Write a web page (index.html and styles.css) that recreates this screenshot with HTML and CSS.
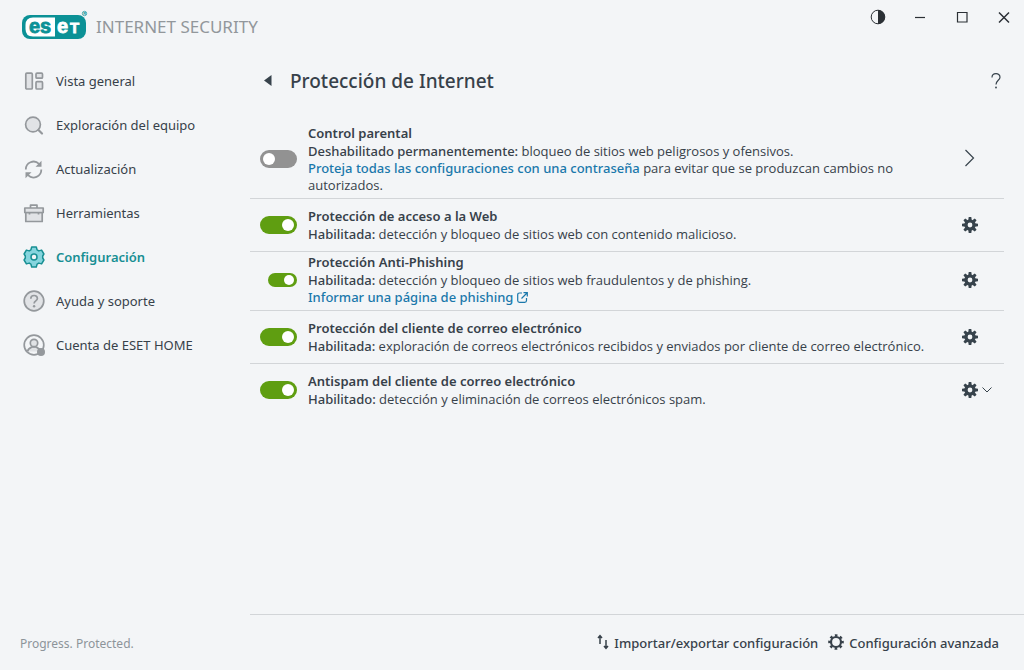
FILE: index.html
```
<!DOCTYPE html>
<html lang="es">
<head>
  <meta charset="UTF-8" />
  <meta name="viewport" content="width=device-width, initial-scale=1" />
  <title>ESET Internet Security</title>
  <link rel="stylesheet" href="styles.css">
</head>
<body>

<!-- Shared icons -->
<svg class="sprite" aria-hidden="true">
  <symbol id="cog" viewBox="0 0 16 16">
    <g fill="currentColor">
      <path fill-rule="evenodd" d="M8 2.4a5.6 5.6 0 1 0 0 11.2a5.6 5.6 0 1 0 0-11.2zM8 5.6a2.4 2.4 0 1 1 0 4.8a2.4 2.4 0 1 1 0-4.8z"/>
      <g id="teeth">
        <path d="M6.700 0h2.600l.5 3.400H6.200zM6.700 16h2.600l.5-3.400H6.200zM0 6.700v2.600l3.400.5V6.200zM16 6.700v2.600l-3.400.5V6.200z"/>
      </g>
      <use href="#teeth" transform="rotate(45 8 8)"/>
    </g>
  </symbol>
</svg>

<div class="window">
  <header class="titlebar">
    <a class="brand" href="#">
      <svg class="logo" width="68" height="30" viewBox="0 0 68 30" role="img" aria-label="eset">
        <rect x="0" y="5" width="64" height="24" rx="8" fill="#0b9196"/>
        <path d="M33 7.500H11Q3.500 7.500 3.500 15v4Q3.500 26.500 11 26.500H33z" fill="#fff"/>
        <g class="logo-text" stroke-width=".8">
          <text x="7" y="22.500" fill="#0b9196" stroke="#0b9196">es</text>
          <text x="35" y="22.500" fill="#fff" stroke="#fff">e</text>
          <text class="logo-t" x="48" y="22.500" fill="#fff" stroke="#fff">T</text>
        </g>
        <circle cx="62.500" cy="3.500" r="2.200" fill="none" stroke="#0b9196" stroke-width=".7"/>
        <text class="logo-reg" x="61.300" y="5" fill="#0b9196">R</text>
      </svg>
      <span class="product">INTERNET SECURITY</span>
    </a>
    <div class="window-buttons">
      <button type="button" aria-label="Contraste">
        <svg width="16" height="16" viewBox="0 0 16 16"><circle cx="8" cy="8" r="6.800" fill="none" stroke="#2b3035"/><path d="M8 1a7 7 0 0 1 0 14z" fill="#2b3035"/></svg>
      </button>
      <button type="button" aria-label="Minimizar">
        <svg width="16" height="16" viewBox="0 0 16 16"><path d="M3 8.500h10" stroke="#2b3035" stroke-width="1.200"/></svg>
      </button>
      <button type="button" aria-label="Maximizar">
        <svg width="16" height="16" viewBox="0 0 16 16"><path d="M3.500 3.500h9.500v9.500h-9.500z" fill="none" stroke="#2b3035" stroke-width="1.200"/></svg>
      </button>
      <button type="button" aria-label="Cerrar">
        <svg width="16" height="16" viewBox="0 0 16 16"><path d="M3 3.500l10 10M13 3.500l-10 10" stroke="#2b3035" stroke-width="1.500"/></svg>
      </button>
    </div>
  </header>

  <aside class="sidebar">
    <nav>
      <a class="nav-item" href="#">
        <svg viewBox="0 0 22 22"><g fill="#e1e3e6" stroke="#94989c" stroke-width="1.700"><rect x="2.800" y="3.200" width="6.500" height="15.800" rx="1"/><rect x="13" y="3.200" width="6.500" height="5" rx="1"/><rect x="13" y="11.700" width="6.500" height="7.300" rx="1"/></g></svg>
        Vista general
      </a>
      <a class="nav-item" href="#">
        <svg viewBox="0 0 22 22"><circle cx="10" cy="10.500" r="7.400" fill="#e1e3e6" stroke="#94989c" stroke-width="1.700"/><path d="M15.500 16l3.500 3.500" stroke="#94989c" stroke-width="2.200" stroke-linecap="round"/></svg>
        Exploración del equipo
      </a>
      <a class="nav-item" href="#">
        <svg viewBox="0 0 22 22"><g fill="none" stroke="#94989c" stroke-width="1.800"><path d="M2.800 11.500A7.800 7.800 0 0 1 16 5.800"/><path d="M18.300 11.500A7.800 7.800 0 0 1 5 17.200"/></g><path d="M18.500 2.800v6h-6zM2.500 20.200v-6h6z" fill="#94989c"/></svg>
        Actualización
      </a>
      <a class="nav-item" href="#">
        <svg viewBox="0 0 22 22"><g fill="#e1e3e6" stroke="#94989c" stroke-width="1.700" stroke-linejoin="round"><path d="M7.500 6V3.200h6.500V6" fill="none"/><path d="M2.800 10.500v9h16.400v-9z"/><rect x="1.800" y="6" width="18.400" height="4.500"/><path d="M6.500 10.500v2M15.500 10.500v2"/></g></svg>
        Herramientas
      </a>
      <a class="nav-item active" href="#" aria-current="page">
        <svg viewBox="0 0 22 22"><path d="M8.700 1h4.600l.8 2.900 1.700 1 2.800-.8 2.300 3.900-1.200 2v2l1.200 2-2.300 3.900-2.800-.8-1.700 1-.8 2.900H8.700l-.8-2.900-1.700-1-2.800.8L1.100 14l1.200-2v-2l-1.200-2 2.300-3.900 2.800.8 1.700-1z" fill="#86d5de" stroke="#178f93" stroke-width="1.500" stroke-linejoin="round"/><circle cx="11" cy="11" r="3" fill="#f3f5f7" stroke="#178f93" stroke-width="1.500"/></svg>
        Configuración
      </a>
      <a class="nav-item" href="#">
        <svg viewBox="0 0 22 22"><circle cx="11" cy="11" r="9.800" fill="#e1e3e6" stroke="#94989c" stroke-width="1.700"/><path d="M7.800 8.700c0-4.200 6.600-4.200 6.600-.2 0 2.400-3.300 2.500-3.300 5" fill="none" stroke="#94989c" stroke-width="1.700"/><circle cx="11.100" cy="16.200" r="1.200" fill="#94989c"/></svg>
        Ayuda y soporte
      </a>
      <a class="nav-item" href="#">
        <svg viewBox="0 0 22 22"><g fill="none" stroke="#94989c" stroke-width="1.700"><circle cx="11" cy="11" r="9.800"/><path d="M4.500 17.500c.6-3.200 3-3.700 4.500-4.500h4c1.500.8 3.900 1.300 4.500 4.500" fill="#e1e3e6"/><circle cx="11" cy="9" r="3.700" fill="#e1e3e6"/></g><circle cx="18" cy="18" r="4" fill="#94989c"/></svg>
        Cuenta de ESET HOME
      </a>
    </nav>
    <p class="slogan">Progress. Protected.</p>
  </aside>

  <main class="main">
    <div class="page-head">
      <button type="button" class="back" aria-label="Atrás">
        <svg width="8" height="12" viewBox="0 0 8 12"><path d="M7.500 0v11L0 5.500z" fill="#37434c"/></svg>
      </button>
      <h1>Protección de Internet</h1>
      <button type="button" class="help" aria-label="Ayuda">
        <svg width="16" height="20" viewBox="0 0 16 20"><path d="M4 6.500c0-5 8-5 8-.3 0 3-4 3.300-4 7.300" fill="none" stroke="#37434c" stroke-width="1.200"/><circle cx="8" cy="16.500" r=".9" fill="#37434c"/></svg>
      </button>
    </div>

    <section class="modules">
      <div class="module tall">
        <input type="checkbox" class="toggle" id="parental">
        <div class="info">
          <label for="parental">Control parental</label>
          <p><b>Deshabilitado permanentemente:</b> bloqueo de sitios web peligrosos y ofensivos.<br>
          <a href="#">Proteja todas las configuraciones con una contraseña</a> para evitar que se produzcan cambios no autorizados.</p>
        </div>
        <button type="button" class="action" aria-label="Abrir control parental">
          <svg width="16" height="20" viewBox="0 0 16 20"><path d="M3.500 1l8 8-8 8" fill="none" stroke="#37434c" stroke-width="1.200"/></svg>
        </button>
      </div>

      <div class="module">
        <input type="checkbox" class="toggle" id="web" checked>
        <div class="info">
          <label for="web">Protección de acceso a la Web</label>
          <p><b>Habilitada:</b> detección y bloqueo de sitios web con contenido malicioso.</p>
        </div>
        <button type="button" class="action" aria-label="Configurar acceso a la Web">
          <svg width="16" height="16"><use href="#cog"/></svg>
        </button>
      </div>

      <div class="module tall">
        <input type="checkbox" class="toggle small" id="phishing" checked>
        <div class="info">
          <label for="phishing">Protección Anti-Phishing</label>
          <p><b>Habilitada:</b> detección y bloqueo de sitios web fraudulentos y de phishing.<br>
          <a href="#">Informar una página de phishing <svg class="external" width="11" height="11" viewBox="0 0 11 11"><path d="M5 1H2.500Q.7 1 .7 2.800v5.700q0 1.800 1.800 1.800h5.200q1.800 0 1.800-1.800V6M6.500.7h3.800v3.800M10 1L4.500 6.500" fill="none" stroke="currentColor" stroke-width="1.200"/></svg></a></p>
        </div>
        <button type="button" class="action" aria-label="Configurar Anti-Phishing">
          <svg width="16" height="16"><use href="#cog"/></svg>
        </button>
      </div>

      <div class="module">
        <input type="checkbox" class="toggle" id="mail" checked>
        <div class="info">
          <label for="mail">Protección del cliente de correo electrónico</label>
          <p><b>Habilitada:</b> exploración de correos electrónicos recibidos y enviados por cliente de correo electrónico.</p>
        </div>
        <button type="button" class="action" aria-label="Configurar cliente de correo">
          <svg width="16" height="16"><use href="#cog"/></svg>
        </button>
      </div>

      <div class="module">
        <input type="checkbox" class="toggle" id="antispam" checked>
        <div class="info">
          <label for="antispam">Antispam del cliente de correo electrónico</label>
          <p><b>Habilitado:</b> detección y eliminación de correos electrónicos spam.</p>
        </div>
        <button type="button" class="action" aria-label="Configurar antispam">
          <svg width="16" height="16"><use href="#cog"/></svg>
          <svg width="12" height="8" viewBox="0 0 12 8"><path d="M1.500 1.500L6 6l4.500-4.500" fill="none" stroke="#37434c"/></svg>
        </button>
      </div>
    </section>

    <footer class="footer">
      <a href="#">
        <svg width="12" height="18" viewBox="0 0 12 18"><path d="M3 10V2M1 4l2-2.300L5 4M9 6v8M7 12l2 2.300L11 12" fill="none" stroke="currentColor" stroke-width="1.500"/></svg>
        Importar/exportar configuración
      </a>
      <a href="#">
        <svg width="16" height="18" viewBox="0 0 16 18"><circle cx="8" cy="8" r="5" fill="none" stroke="currentColor" stroke-width="2.200"/><circle cx="8" cy="8" r="6.600" fill="none" stroke="currentColor" stroke-width="2.400" stroke-dasharray="2.590 2.590" stroke-dashoffset="1.300"/></svg>
        Configuración avanzada
      </a>
    </footer>
  </main>
</div>

</body>
</html>
```

FILE: styles.css
```
* {
  box-sizing: border-box;
}
body {
  margin: 0;
  background-color: #f3f5f7;
  font-family: "Noto Sans", "Open Sans", sans-serif;
  font-size: 13px;
  line-height: 17px;
  color: #37414a;
}
a {
  color: inherit;
  text-decoration: none;
}
button {
  padding: 0;
  border: none;
  background: none;
  color: #37434c;
  cursor: pointer;
}
svg {
  display: block;
}
.sprite {
  position: absolute;
  width: 0;
  height: 0;
}
.window {
  display: grid;
  grid-template-columns: 250px 1fr;
  grid-template-rows: 54px 1fr;
  min-height: 100vh;
}

/* Title bar */
.titlebar {
  grid-column: 1 / -1;
  display: flex;
  justify-content: space-between;
  align-items: flex-start;
  padding: 9px 12px 0 22px;
}
.brand {
  display: flex;
  gap: 6px;
}
.logo {
  margin-top: 1px;
}
.logo-text {
  font: bold 20px "Liberation Sans", sans-serif;
}
.logo-t {
  font-size: 15px;
}
.logo-reg {
  font: bold 4px "Liberation Sans", sans-serif;
}
.product {
  font-size: 17px;
  line-height: 36px;
  color: #92979b;
}
.window-buttons {
  display: flex;
  gap: 26px;
}

/* Sidebar */
.sidebar {
  display: flex;
  flex-direction: column;
  justify-content: space-between;
  padding: 5px 0 18px;
}
.nav-item {
  display: flex;
  align-items: center;
  gap: 11px;
  height: 44px;
  padding-left: 23px;
}
.nav-item svg {
  width: 22px;
  height: 22px;
}
.nav-item.active {
  color: #178f93;
  font-weight: 600;
}
.slogan {
  margin: 0;
  padding-left: 20px;
  font-size: 12px;
  color: #8d949a;
}

/* Main area */
.main {
  display: flex;
  flex-direction: column;
}
.page-head {
  display: flex;
  align-items: center;
  height: 54px;
  padding: 0 20px 0 14px;
}
h1 {
  flex: 1;
  margin: 0 0 0 18px;
  font-size: 19px;
  line-height: 28px;
  font-weight: 500;
}
.modules {
  flex: 1;
  margin-right: 20px;
  padding-top: 15px;
}
.module {
  display: grid;
  grid-template-columns: 47px 1fr 42px;
  align-items: center;
  column-gap: 11px;
  padding: 8px 0;
  border-bottom: 1px solid #d2d5d8;
}
.module.tall {
  padding: 1px 0 4px;
}
.module:last-child {
  border-bottom: none;
}
.info label {
  display: block;
  line-height: 19px;
  font-weight: 600;
}
.info p {
  margin: 0;
  font-family: "Open Sans", "Noto Sans", sans-serif;
}
.info b,
.info a {
  font-family: "Noto Sans", "Open Sans", sans-serif;
  font-weight: 500;
}
.info a {
  color: #1a78ab;
}
.external {
  display: inline-block;
  vertical-align: -1px;
}
.action {
  display: flex;
  align-items: center;
  gap: 3px;
}

/* On/off switch */
.toggle {
  appearance: none;
  display: flex;
  align-items: center;
  justify-self: end;
  width: 37px;
  height: 18px;
  margin: 0;
  padding: 0 3px;
  border-radius: 9px;
  background-color: #929292;
  cursor: pointer;
}
.toggle::before {
  content: "";
  width: 12px;
  height: 12px;
  border-radius: 50%;
  background-color: #fff;
}
.toggle:checked {
  justify-content: flex-end;
  background-color: #5f9e11;
}
.toggle.small {
  width: 29px;
  height: 14px;
}
.toggle.small::before {
  width: 10px;
  height: 10px;
}

/* Footer */
.footer {
  display: flex;
  justify-content: flex-end;
  gap: 10px;
  padding: 19px 25px 18px 0;
  border-top: 1px solid #d2d5d8;
  font-weight: 500;
}
.footer a {
  display: flex;
  align-items: center;
  gap: 5px;
}
```
